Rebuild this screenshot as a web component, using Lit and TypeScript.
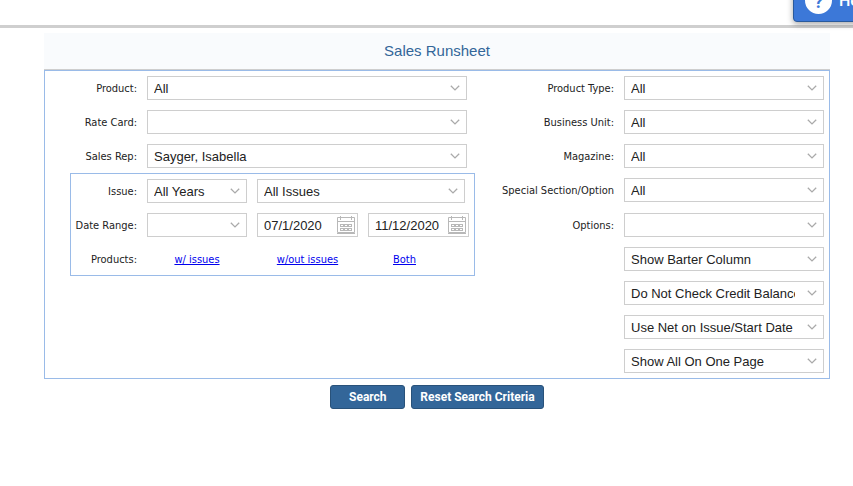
import { LitElement, html, css, svg } from "lit";
import { customElement } from "lit/decorators.js";

@customElement("app-root")
class AppRoot extends LitElement {
  static styles = css`
    :host {
      display: block;
      position: relative;
      overflow: hidden;
      min-height: 100vh;
      background: #fff;
      color: #222;
      font: 11px/14px "DejaVu Sans Condensed", Tahoma, sans-serif;
    }
    .top {
      height: 25px;
      border-bottom: 3px solid #cfcfcf;
    }
    .help {
      position: absolute;
      top: -25px;
      right: -40px;
      display: flex;
      align-items: center;
      gap: 7px;
      box-sizing: border-box;
      width: 100px;
      height: 47px;
      padding: 4px 11px 0;
      border: 1px solid #2a5a9c;
      border-radius: 4px;
      background: #3c78d8;
      box-shadow: 0 2px 6px rgba(0, 0, 0, 0.35);
      color: #fff;
      font: 500 16px/20px Roboto, Arial, sans-serif;
    }
    .mark {
      flex: none;
      width: 27px;
      height: 27px;
      border-radius: 50%;
      background: #fff;
      color: #3c78d8;
      font-weight: bold;
      font-size: 18px;
      line-height: 29px;
    }
    .main {
      margin: 5px 23px 0 44px;
    }
    .title {
      margin: 0;
      border-bottom: 1px solid #cecece;
      background: #f9fbfd;
      color: #336699;
      font: 15px/36px "Liberation Sans", Arial, sans-serif;
      text-align: center;
    }
    .panel {
      display: grid;
      grid-template-columns: minmax(0, 430fr) minmax(0, 349fr);
      padding: 5px 5px 5px 0;
      border: 1px solid #9abbe8;
    }
    .column {
      display: flex;
      flex-direction: column;
      gap: 10px;
    }
    .row {
      display: grid;
      grid-template-columns: 92px minmax(0, 1fr);
      column-gap: 10px;
      margin-right: 8px;
    }
    .options .row {
      grid-template-columns: minmax(0, 1fr) 200px;
      margin-right: 0;
    }
    .options .tall {
      height: 25px;
    }
    .label {
      align-self: center;
      padding-top: 1px;
      text-align: right;
      white-space: nowrap;
    }
    .field {
      display: grid;
      height: 24px;
      min-width: 0;
    }
    .row .field {
      grid-column: 2;
    }
    .select,
    .chevron {
      grid-area: 1 / 1;
    }
    .select,
    .input {
      color: #222;
      font: 13px/22px "Liberation Sans", Arial, sans-serif;
    }
    .select {
      appearance: none;
      box-sizing: border-box;
      width: 100%;
      height: 24px;
      margin: 0;
      padding: 1px 28px 0 6px;
      border: 1px solid #cecece;
      border-radius: 0;
      background: #fff;
    }
    .chevron {
      justify-self: end;
      width: 10px;
      height: 6px;
      margin: 9px 7px 0 0;
      pointer-events: none;
    }
    .date {
      display: flex;
      box-sizing: border-box;
      height: 24px;
      min-width: 0;
      border: 1px solid #cecece;
      background: #fff;
    }
    .input {
      flex: 1;
      min-width: 0;
      padding: 1px 0 0 6px;
      border: 0;
      outline: 0;
      background: none;
    }
    .pick {
      flex: none;
      display: flex;
      align-items: center;
      padding: 0 2px;
      border: 0;
      background: none;
    }
    .icon {
      width: 18px;
      height: 18px;
    }
    .group {
      display: flex;
      flex-direction: column;
      gap: 10px;
      margin: -5px 0 0 25px;
      padding: 5px 5px 4px 0;
      border: 1px solid #9abbe8;
    }
    .line {
      display: grid;
      grid-template-columns: 66px 100px minmax(0, 1fr) minmax(0, 1fr);
      column-gap: 10px;
      min-height: 24px;
    }
    .wide {
      grid-column: 3 / 5;
      margin-right: 4px;
    }
    .link {
      place-self: center;
      padding-top: 1px;
      color: #0000ee;
    }
    .both {
      justify-self: start;
      margin-left: 25px;
    }
    .actions {
      display: flex;
      justify-content: center;
      gap: 6px;
      margin-top: 6px;
    }
    .button {
      height: 24px;
      min-width: 75px;
      padding: 0 8px;
      border: 1px solid #29527a;
      border-radius: 3px;
      background: #336699;
      color: #fff;
      font: bold 12px/22px Roboto, Arial, sans-serif;
    }
  `;

  private left = [
    ["product", "Product:", "All"],
    ["rate-card", "Rate Card:", ""],
    ["sales-rep", "Sales Rep:", "Sayger, Isabella"],
  ];

  private right = [
    ["product-type", "Product Type:", "All"],
    ["business-unit", "Business Unit:", "All"],
    ["magazine", "Magazine:", "All"],
    ["section", "Special Section/Option", "All"],
    ["options", "Options:", ""],
    ["barter", "", "Show Barter Column"],
    ["credit", "", "Do Not Check Credit Balance"],
    ["net", "", "Use Net on Issue/Start Date"],
    ["paging", "", "Show All On One Page"],
  ];

  private dropDown(id: string, value: string, name = "", extra = "") {
    return html`
      <div class="field ${extra}">
        <select class="select" id=${id} aria-label=${name || value || id}>
          <option>${value}</option>
        </select>
        <svg class="chevron" viewBox="0 0 10 6" fill="none" stroke="#aaa" stroke-width="1.3">
          <path d="M.8 .7 5 4.9 9.2 .7" />
        </svg>
      </div>
    `;
  }

  private dateField(name: string, value: string) {
    const cells = [3, 7, 11].flatMap((x) =>
      [8, 12].map((y) => svg`<rect x=${x + 0.5} y=${y + 0.5} width="3" height="2" />`)
    );
    return html`
      <div class="date">
        <input class="input" type="text" aria-label=${name} .value=${value} />
        <button class="pick" type="button" aria-label="Open calendar">
          <svg class="icon" viewBox="0 0 18 18" fill="none" stroke="#b8b8b8">
            <path d="M.5 1.5h17v15H.5zM0 17.5h18M1 5.5h16M3.5 0v4M14.5 0v4" />
            ${cells}
          </svg>
        </button>
      </div>
    `;
  }

  private row([id, label, value]: string[]) {
    return html`
      <div class="row ${id === "section" ? "tall" : ""}">
        ${label ? html`<label class="label" for=${id}>${label}</label>` : ""}
        ${this.dropDown(id, value, label)}
      </div>
    `;
  }

  render() {
    return html`
      <div class="top"></div>
      <button class="help" type="button"><span class="mark">?</span>Help</button>
      <main class="main">
        <h1 class="title">Sales Runsheet</h1>
        <div class="panel">
          <div class="column">
            ${this.left.map((r) => this.row(r))}
            <div class="group">
              <div class="line">
                <label class="label" for="year">Issue:</label>
                ${this.dropDown("year", "All Years")}
                ${this.dropDown("issue", "All Issues", "Issue", "wide")}
              </div>
              <div class="line">
                <label class="label" for="range">Date Range:</label>
                ${this.dropDown("range", "")}
                ${this.dateField("From", "07/1/2020")}
                ${this.dateField("To", "11/12/2020")}
              </div>
              <div class="line">
                <span class="label">Products:</span>
                <a class="link" href="#with">w/ issues</a>
                <a class="link" href="#without">w/out issues</a>
                <a class="link both" href="#both">Both</a>
              </div>
            </div>
          </div>
          <div class="column options">${this.right.map((r) => this.row(r))}</div>
        </div>
        <div class="actions">
          <button class="button" type="button">Search</button>
          <button class="button" type="button">Reset Search Criteria</button>
        </div>
      </main>
    `;
  }
}
